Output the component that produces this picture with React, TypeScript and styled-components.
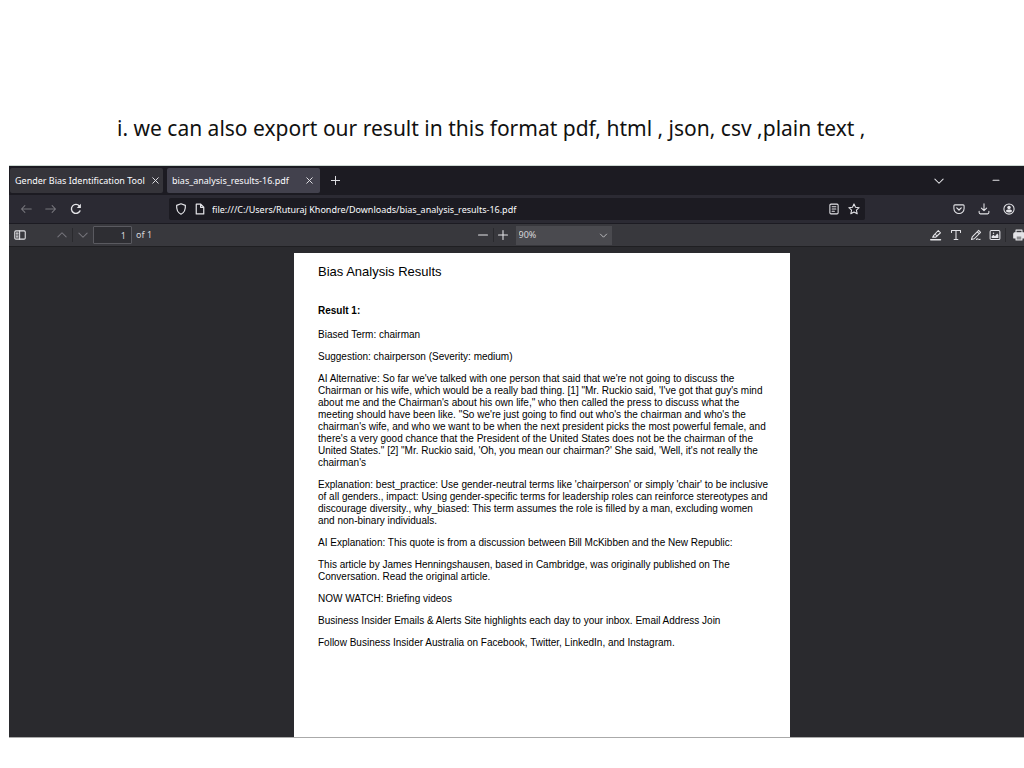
import React from "react";
import styled, { createGlobalStyle } from "styled-components";

const GlobalStyle = createGlobalStyle`
  *, *::before, *::after { box-sizing: border-box; }
  body { margin: 0; background: #fff; }
  button, input, select { font: inherit; color: inherit; margin: 0; padding: 0; border: 0; background: none; }
`;

const Slide = styled.main`
  min-height: 100vh;
  padding: 112px 0 38px 9px;
  overflow: hidden;
`;

const Caption = styled.h1`
  margin: 0 0 21px 108px;
  font: 400 21px/32px "Noto Sans", sans-serif;
  color: #111;
  white-space: nowrap;
`;

const BrowserWindow = styled.section`
  border-top: 1px solid #cdd8d2;
  border-bottom: 1px solid #aaa;
  background: #2a2a2e;
  color: #fbfbfe;
  font: 9px/12px "Noto Sans", sans-serif;
  overflow: hidden;
`;

const TabBar = styled.div`
  display: flex;
  align-items: center;
  height: 29px;
  padding: 0 5px 0 1px;
  background: #1c1b22;
`;

const TabItem = styled.div<{ $active?: boolean }>`
  display: flex;
  align-items: center;
  width: 153px;
  height: 25px;
  margin-right: ${(p) => (p.$active ? 0 : 4)}px;
  padding-left: 5px;
  border-radius: 2px;
  background: ${(p) => (p.$active ? "#42414d" : "#35343a")};
`;

const TabTitle = styled.button`
  flex: 1;
  text-align: left;
  white-space: nowrap;
`;

const IconButton = styled.button<{ $width?: number; $dim?: boolean }>`
  display: flex;
  flex: none;
  align-items: center;
  justify-content: center;
  width: ${(p) => p.$width ?? 25}px;
  height: 20px;
  color: ${(p) => (p.$dim ? "#77767d" : "#e4e4e8")};
`;

const Spacer = styled.div`
  flex: 1;
`;

const WindowControls = styled.div`
  display: flex;
  gap: 18px;
`;

const NavBar = styled.div`
  display: flex;
  align-items: center;
  gap: 81px;
  height: 29px;
  padding: 0 3px 0 4px;
  border-bottom: 1px solid #1c1b22;
  background: #2b2a33;
`;

const Group = styled.div`
  display: flex;
  align-items: center;
`;

const AddressBar = styled.form`
  display: flex;
  flex: 1;
  align-items: center;
  height: 22px;
  padding: 0 2px;
  border-radius: 2px;
  background: #1c1b22;
`;

const AddressInput = styled.input`
  flex: 1;
  min-width: 0;
  height: 18px;
  padding-left: 2px;
`;

const PdfToolbar = styled.div`
  display: grid;
  grid-template-columns: calc(50% - 44px) auto 1fr;
  align-items: center;
  height: 23px;
  border-bottom: 1px solid #1f1f22;
  background: #38383d;
  color: #d6d6d9;
`;

const RightGroup = styled(Group)`
  justify-content: flex-end;
`;

const PageControls = styled(Group)`
  margin-left: 22px;
`;

const Divider = styled.span`
  width: 1px;
  height: 14px;
  background: #2a2a2e;
`;

const PageLabel = styled.label`
  display: flex;
  align-items: center;
  gap: 4px;
`;

const PageInput = styled.input`
  width: 39px;
  height: 18px;
  padding-right: 5px;
  border: 1px solid #5a5a60;
  border-radius: 1px;
  background: #2e2e33;
  text-align: right;
`;

const ZoomBox = styled.div`
  display: grid;
  align-items: center;
  width: 96px;
  height: 19px;
  margin-left: 3px;
  background: #4a4a4f;
  & > * { grid-area: 1 / 1; }
  & > svg { justify-self: end; margin-right: 4px; pointer-events: none; }
`;

const ZoomSelect = styled.select`
  width: 100%;
  height: 19px;
  padding-left: 3px;
  appearance: none;
`;

const PrintButton = styled(IconButton)`
  justify-content: flex-start;
  padding-left: 7px;
  overflow: hidden;
`;

const Viewer = styled.div`
  display: flex;
  justify-content: center;
  padding: 6px 0 0 51px;
`;

const Paper = styled.article`
  width: 496px;
  padding: 10px 16px 78px 24px;
  background: #fff;
  color: #000;
  font: 10px/12px "Liberation Sans", Arial, sans-serif;
`;

const PaperTitle = styled.h2`
  margin: 0 0 24px;
  font-size: 13px;
  font-weight: 400;
  line-height: 18px;
`;

const ResultTitle = styled.h3`
  margin: 0 0 12px;
  font-size: 10px;
  line-height: 12px;
`;

const Paragraph = styled.p`
  margin: 0 0 10px;
  white-space: pre-line;
`;

const Svg = styled.svg<{ $size: number }>`
  display: block;
  flex: none;
  width: ${(p) => p.$size}px;
  height: ${(p) => p.$size}px;
  fill: none;
  stroke: currentColor;
  stroke-width: 1.4;
  stroke-linecap: round;
  stroke-linejoin: round;
`;

const shapes = {
  close: <path d="M4 4l8 8M12 4l-8 8" />,
  plus: <path d="M8 2v12M2 8h12" />,
  minus: <path d="M2 8h12" />,
  dash: <path d="M4 7h8" />,
  down: <path d="M2.500 5.500L8 11l5.500-5.500" />,
  up: <path d="M2.500 10.500L8 5l5.500 5.500" />,
  back: <path d="M15 8H2M6.500 3.500L2 8l4.500 4.500" />,
  forward: <path d="M1 8h13M9.500 3.500L14 8l-4.500 4.500" />,
  reload: (
    <>
      <path d="M13.300 10.500A6 6 0 1 1 12.500 4" strokeWidth="1.800" />
      <path d="M14.500 1v5.500H9z" fill="currentColor" stroke="none" />
    </>
  ),
  shield: <path d="M8 1l5.800 2.200c.4 5.400-1.300 9.600-5.800 11.800C3.500 12.800 1.800 8.600 2.200 3.200z" strokeWidth="1.600" />,
  page: <path d="M3 1.500h6l4 4v9H3zM8.800 1.800v4h4" strokeWidth="1.600" />,
  reader: (
    <>
      <rect x="2.500" y="1.500" width="11" height="13" rx="1.500" />
      <path d="M5.500 5h5M5.500 8h5M5.500 11h3" />
    </>
  ),
  star: <path d="M8 1.200l2 4.500 4.900.5-3.700 3.300 1.100 4.900L8 11.900l-4.300 2.500 1.100-4.900L1.100 6.200 6 5.700z" />,
  pocket: (
    <>
      <path d="M2.500 2.500h11c.8 0 1.300.5 1.300 1.300v3.500a6.800 6.800 0 0 1-13.600 0V3.800c0-.8.5-1.300 1.300-1.300z" />
      <path d="M5 6.500l3 2.800 3-2.800" strokeWidth="1.700" />
    </>
  ),
  download: <path d="M8 1v9M4.500 6.700L8 10.200l3.500-3.500M1.500 11v1.800c0 1 .6 1.700 1.700 1.700h9.600c1.100 0 1.700-.7 1.700-1.700V11" />,
  account: (
    <>
      <circle cx="8" cy="8" r="6.800" />
      <circle cx="8" cy="6" r="2.300" fill="currentColor" stroke="none" />
      <path d="M3.800 11c0-2 1.700-2.500 4.200-2.500s4.200.5 4.200 2.500c-2.300 2.300-6.100 2.300-8.400 0z" fill="currentColor" stroke="none" />
    </>
  ),
  sidebar: (
    <>
      <rect x="1" y="2.500" width="14" height="11" rx="1.500" />
      <path d="M7.500 2.500v11M3 5.500h2.500M3 8h2.500M3 10.500h2.500" />
    </>
  ),
  highlight: (
    <>
      <path d="M5 8.500l6-6.500 3 3-6.500 6H5zM5 8.500L3.500 11H6M7 7l2.500 2.500" />
      <path d="M1 14.300h13" strokeWidth="1.900" />
    </>
  ),
  text: <path d="M2 4.500V2h12v2.500M8 2v12M5.500 14h5" />,
  draw: <path d="M3 10.500L11.500 1.800l2.600 2.600L5.700 13 2 14zM9.700 3.800l2.500 2.500M8.500 14c1.700-2.300 2.800.8 5-.3" />,
  image: (
    <>
      <rect x="1.500" y="2" width="13" height="12" rx="1.500" />
      <path d="M3.500 12V9.500L6 7.500l2 2L11 6l1.500 2v4z" fill="currentColor" stroke="none" />
      <circle cx="6" cy="5.500" r="1" fill="currentColor" stroke="none" />
    </>
  ),
  print: (
    <>
      <path d="M4 5V1.500h8V5" />
      <path d="M1 6.500C1 5.500 1.700 5 2.500 5h11c.8 0 1.500.5 1.500 1.500V12h-3v2.500H4V12H1z" fill="currentColor" />
      <path d="M5 10h6v4H5z" fill="#8c8c90" stroke="none" />
    </>
  ),
};

type IconName = keyof typeof shapes;

function Icon({ name, size = 12 }: { name: IconName; size?: number }) {
  return (
    <Svg viewBox="0 0 16 16" $size={size} aria-hidden="true">
      {shapes[name]}
    </Svg>
  );
}

interface ToolProps {
  name: IconName;
  label: string;
  size?: number;
  width?: number;
  dim?: boolean;
}

function Tool({ name, label, size, width, dim }: ToolProps) {
  return (
    <IconButton type="button" aria-label={label} $width={width} $dim={dim}>
      <Icon name={name} size={size} />
    </IconButton>
  );
}

const paragraphs = [
  "Biased Term: chairman",
  "Suggestion: chairperson (Severity: medium)",
  `AI Alternative: So far we've talked with one person that said that we're not going to discuss the
Chairman or his wife, which would be a really bad thing. [1] "Mr. Ruckio said, 'I've got that guy's mind
about me and the Chairman's about his own life," who then called the press to discuss what the
meeting should have been like. "So we're just going to find out who's the chairman and who's the
chairman's wife, and who we want to be when the next president picks the most powerful female, and
there's a very good chance that the President of the United States does not be the chairman of the
United States." [2] "Mr. Ruckio said, 'Oh, you mean our chairman?' She said, 'Well, it's not really the
chairman's`,
  `Explanation: best_practice: Use gender-neutral terms like 'chairperson' or simply 'chair' to be inclusive
of all genders., impact: Using gender-specific terms for leadership roles can reinforce stereotypes and
discourage diversity., why_biased: This term assumes the role is filled by a man, excluding women
and non-binary individuals.`,
  "AI Explanation: This quote is from a discussion between Bill McKibben and the New Republic:",
  `This article by James Henningshausen, based in Cambridge, was originally published on The
Conversation. Read the original article.`,
  "NOW WATCH: Briefing videos",
  "Business Insider Emails & Alerts Site highlights each day to your inbox. Email Address Join",
  "Follow Business Insider Australia on Facebook, Twitter, LinkedIn, and Instagram.",
];

export default function App() {
  return (
    <Slide>
      <GlobalStyle />
      <Caption>i. we can also export our result in this format pdf, html , json, csv ,plain text ,</Caption>
      <BrowserWindow>
        <TabBar>
          <TabItem>
            <TabTitle type="button">Gender Bias Identification Tool</TabTitle>
            <Tool name="close" label="Close tab" size={11} width={22} />
          </TabItem>
          <TabItem $active>
            <TabTitle type="button">bias_analysis_results-16.pdf</TabTitle>
            <Tool name="close" label="Close tab" size={11} width={22} />
          </TabItem>
          <Tool name="plus" label="New tab" size={11} width={30} />
          <Spacer />
          <WindowControls>
            <Tool name="down" label="List all tabs" width={32} />
            <Tool name="dash" label="Minimize" width={46} />
          </WindowControls>
        </TabBar>
        <NavBar>
          <Group>
            <Tool name="back" label="Back" dim />
            <Tool name="forward" label="Forward" dim />
            <Tool name="reload" label="Reload" />
          </Group>
          <AddressBar>
            <Tool name="shield" label="Tracking protection" width={19} />
            <Tool name="page" label="Site information" width={20} />
            <AddressInput
              aria-label="Address"
              defaultValue="file:///C:/Users/Ruturaj Khondre/Downloads/bias_analysis_results-16.pdf"
            />
            <Tool name="reader" label="Reader view" width={20} />
            <Tool name="star" label="Bookmark" width={19} />
          </AddressBar>
          <Group>
            <Tool name="pocket" label="Save to Pocket" />
            <Tool name="download" label="Downloads" />
            <Tool name="account" label="Account" />
          </Group>
        </NavBar>
        <PdfToolbar>
          <Group>
            <Tool name="sidebar" label="Toggle sidebar" width={21} />
            <PageControls>
              <Tool name="up" label="Previous page" width={20} dim />
              <Divider />
              <Tool name="down" label="Next page" width={20} dim />
              <PageLabel>
                <PageInput defaultValue="1" />
                of 1
              </PageLabel>
            </PageControls>
          </Group>
          <Group>
            <Tool name="minus" label="Zoom out" width={20} />
            <Divider />
            <Tool name="plus" label="Zoom in" width={19} />
            <ZoomBox>
              <ZoomSelect aria-label="Zoom" defaultValue="90%">
                <option>90%</option>
              </ZoomSelect>
              <Icon name="down" size={9} />
            </ZoomBox>
          </Group>
          <RightGroup>
            <Tool name="highlight" label="Highlight" width={20} />
            <Tool name="text" label="Text" width={20} />
            <Tool name="draw" label="Draw" width={19} />
            <Tool name="image" label="Add image" width={20} />
            <Divider />
            <PrintButton type="button" aria-label="Print" $width={18}>
              <Icon name="print" size={12} />
            </PrintButton>
          </RightGroup>
        </PdfToolbar>
        <Viewer>
          <Paper>
            <PaperTitle>Bias Analysis Results</PaperTitle>
            <ResultTitle>Result 1:</ResultTitle>
            {paragraphs.map((text) => (
              <Paragraph key={text}>{text}</Paragraph>
            ))}
          </Paper>
        </Viewer>
      </BrowserWindow>
    </Slide>
  );
}
